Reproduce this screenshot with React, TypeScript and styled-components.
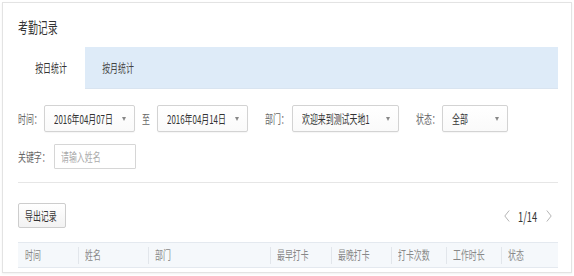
import React from 'react';
import styled, { createGlobalStyle } from 'styled-components';

const GlobalStyle = createGlobalStyle`
  html, body {
    margin: 0;
    padding: 0;
    background: #fff;
  }
  body {
    font-family: "Noto Sans CJK SC", "Noto Sans", sans-serif;
    font-size: 12px;
    color: #333;
  }
`;

// the screenshot's glyphs are narrow, so text is squeezed horizontally
const Squish = styled.span<{ $origin?: string }>`
  display: inline-block;
  white-space: nowrap;
  line-height: 1;
  transform: scaleX(0.66);
  transform-origin: ${p => p.$origin ?? 'left'} center;
`;

const Page = styled.div`
  padding: 2px;
`;

const Card = styled.div`
  width: 570px;
  height: 271px;
  box-sizing: border-box;
  border: 1px solid #e3e3e3;
  box-shadow: 0 1px 2px rgba(0, 0, 0, 0.06);
  padding: 0 13px 0 15px;
  display: flex;
  flex-direction: column;
`;

const Title = styled.div`
  height: 44px;
  box-sizing: border-box;
  padding-top: 3px;
  display: flex;
  align-items: center;
  font-size: 15px;
  color: #333;
`;

const TabBar = styled.div`
  display: flex;
  height: 42px;
  background: #deebf8;
  border-bottom: 1px solid #d9e4f0;
  box-sizing: border-box;
`;

const Tab = styled.div<{ $active?: boolean }>`
  width: 67px;
  display: flex;
  align-items: center;
  justify-content: center;
  background: ${p => (p.$active ? '#fff' : 'transparent')};
  margin-bottom: ${p => (p.$active ? '-1px' : '0')};
  color: ${p => (p.$active ? '#333' : '#444')};
`;

const FilterRow = styled.div<{ $top: number; $h: number }>`
  display: flex;
  align-items: center;
  margin-top: ${p => p.$top}px;
  height: ${p => p.$h}px;
`;

const Label = styled.div<{ $w: number; $ml?: number; $mr?: number }>`
  width: ${p => p.$w}px;
  margin-left: ${p => p.$ml ?? 0}px;
  margin-right: ${p => p.$mr ?? 0}px;
  flex-shrink: 0;
  color: #666;
`;

const Select = styled.div<{ $w: number }>`
  width: ${p => p.$w}px;
  height: 27px;
  box-sizing: border-box;
  flex-shrink: 0;
  border: 1px solid #d3d3d3;
  border-radius: 2px;
  background: linear-gradient(#fff, #fafafa);
  box-shadow: 0 1px 1px rgba(0, 0, 0, 0.04);
  display: flex;
  align-items: center;
  padding: 0 8px 0 9px;
  color: #333;
`;

const ValueText = styled(Squish)`
  flex: 1;
  min-width: 0;
`;

const Caret = styled.span`
  width: 0;
  height: 0;
  border-left: 2.5px solid transparent;
  border-right: 2.5px solid transparent;
  border-top: 4px solid #888;
  flex-shrink: 0;
`;

const TextBox = styled.div`
  width: 82px;
  height: 25px;
  box-sizing: border-box;
  border: 1px solid #d6d6d6;
  border-radius: 1px;
  padding-left: 6px;
  display: flex;
  align-items: center;
  color: #aaa;
`;

const Divider = styled.div`
  height: 1px;
  background: #e6e6e6;
  margin-top: 13px;
`;

const Toolbar = styled.div`
  display: flex;
  justify-content: space-between;
  align-items: center;
  margin-top: 20px;
  height: 25px;
`;

const Button = styled.div`
  width: 48px;
  height: 25px;
  box-sizing: border-box;
  border: 1px solid #cdcdcd;
  border-radius: 2px;
  background: linear-gradient(#fff, #f2f2f2);
  padding-left: 6px;
  display: flex;
  align-items: center;
  color: #333;
`;

const Pager = styled.div`
  display: flex;
  align-items: center;
  gap: 8px;
  margin-right: 6px;
`;

const PageNum = styled.div`
  width: 20px;
  font-size: 14px;
  color: #333;
`;

const HeadRow = styled.div`
  margin-top: 14px;
  height: 26px;
  box-sizing: border-box;
  display: flex;
  align-items: center;
  background: #f5f8fb;
  border-top: 1px solid #e4e9ef;
  border-bottom: 1px solid #e4e9ef;
`;

const HeadCell = styled.div<{ $w: number; $first?: boolean }>`
  width: ${p => p.$w}px;
  height: 17px;
  box-sizing: border-box;
  flex-shrink: 0;
  display: flex;
  align-items: center;
  padding-left: ${p => (p.$first ? 7 : 6)}px;
  border-left: ${p => (p.$first ? 'none' : '1px solid #e2e6eb')};
  color: #888;
`;

const Chevron = ({ dir }: { dir: 'left' | 'right' }) => (
  <svg width="6" height="12" viewBox="0 0 6 12">
    <path
      d={dir === 'left' ? 'M5.2 0.5 L0.8 6 L5.2 11.5' : 'M0.8 0.5 L5.2 6 L0.8 11.5'}
      fill="none"
      stroke="#b5b5b5"
      strokeWidth="1"
    />
  </svg>
);

const columns: [string, number][] = [
  ['时间', 60],
  ['姓名', 70],
  ['部门', 122],
  ['最早打卡', 61],
  ['最晚打卡', 60],
  ['打卡次数', 55],
  ['工作时长', 55],
  ['状态', 56],
];

const App = () => (
  <Page>
    <GlobalStyle />
    <Card>
      <Title>
        <Squish>考勤记录</Squish>
      </Title>

      <TabBar>
        <Tab $active>
          <Squish $origin="center">按日统计</Squish>
        </Tab>
        <Tab>
          <Squish $origin="center">按月统计</Squish>
        </Tab>
      </TabBar>

      <FilterRow $top={16} $h={27}>
        <Label $w={26}><Squish>时间：</Squish></Label>
        <Select $w={91}>
          <ValueText>2016年04月07日</ValueText>
          <Caret />
        </Select>
        <Label $w={8} $ml={7} $mr={7}><Squish>至</Squish></Label>
        <Select $w={91}>
          <ValueText>2016年04月14日</ValueText>
          <Caret />
        </Select>
        <Label $w={27} $ml={17}><Squish>部门：</Squish></Label>
        <Select $w={107}>
          <ValueText>欢迎来到测试天地1</ValueText>
          <Caret />
        </Select>
        <Label $w={26} $ml={17}><Squish>状态：</Squish></Label>
        <Select $w={66}>
          <ValueText>全部</ValueText>
          <Caret />
        </Select>
      </FilterRow>

      <FilterRow $top={12} $h={25}>
        <Label $w={36}><Squish>关键字：</Squish></Label>
        <TextBox>
          <Squish>请输入姓名</Squish>
        </TextBox>
      </FilterRow>

      <Divider />

      <Toolbar>
        <Button>
          <Squish>导出记录</Squish>
        </Button>
        <Pager>
          <Chevron dir="left" />
          <PageNum><Squish>1/14</Squish></PageNum>
          <Chevron dir="right" />
        </Pager>
      </Toolbar>

      <HeadRow>
        {columns.map(([name, w], i) => (
          <HeadCell key={name} $w={w} $first={i === 0}>
            <Squish>{name}</Squish>
          </HeadCell>
        ))}
      </HeadRow>
    </Card>
  </Page>
);

export default App;
